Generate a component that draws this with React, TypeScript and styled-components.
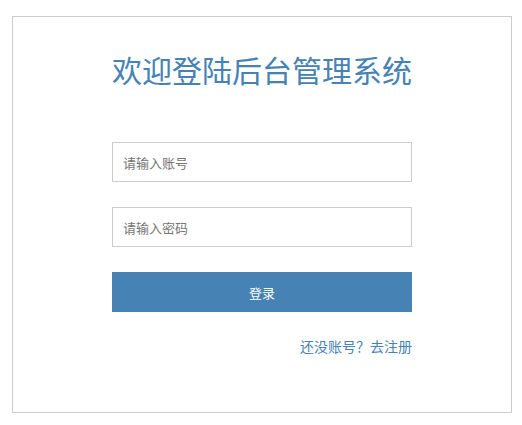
import React from "react";
import styled, { createGlobalStyle } from "styled-components";

const Global = createGlobalStyle`
  html, body { margin: 0; padding: 0; background: #fff; }
  body { font-family: "Noto Sans CJK SC", "Noto Sans", sans-serif; }
`;

const Page = styled.div`
  padding: 16px 0 0 12px;
`;

const Card = styled.div`
  box-sizing: border-box;
  width: 500px;
  height: 397px;
  border: 1px solid #cccccc;
  display: flex;
  flex-direction: column;
  align-items: center;
`;

const Title = styled.h1`
  margin: 30px 0 0 0;
  font-size: 30px;
  font-weight: 400;
  line-height: 44px;
  color: #4682b4;
`;

const Form = styled.form`
  width: 300px;
  margin-top: 51px;
  display: flex;
  flex-direction: column;
`;

const Input = styled.input`
  box-sizing: border-box;
  width: 300px;
  height: 40px;
  border: 1px solid #cccccc;
  padding: 0 10px;
  font-family: "Noto Sans CJK SC", sans-serif;
  font-size: 13px;
  color: #333;
  outline: none;
  margin-bottom: 25px;
  &::placeholder { color: #757575; }
`;

const Button = styled.button`
  height: 40px;
  width: 300px;
  border: none;
  background: #4682b4;
  color: #fff;
  font-family: "Noto Sans CJK SC", sans-serif;
  font-size: 13px;
  cursor: pointer;
`;

const LinkRow = styled.div`
  display: flex;
  justify-content: flex-end;
  margin-top: 24px;
`;

const Link = styled.a`
  font-size: 14px;
  line-height: 20px;
  color: #4682b4;
  text-decoration: none;
`;

export default function App() {
  return (
    <>
      <Global />
      <Page>
        <Card>
          <Title>欢迎登陆后台管理系统</Title>
          <Form onSubmit={(e) => e.preventDefault()}>
            <Input placeholder="请输入账号" />
            <Input type="password" placeholder="请输入密码" />
            <Button type="submit">登录</Button>
            <LinkRow>
              <Link href="#">还没账号？去注册</Link>
            </LinkRow>
          </Form>
        </Card>
      </Page>
    </>
  );
}
